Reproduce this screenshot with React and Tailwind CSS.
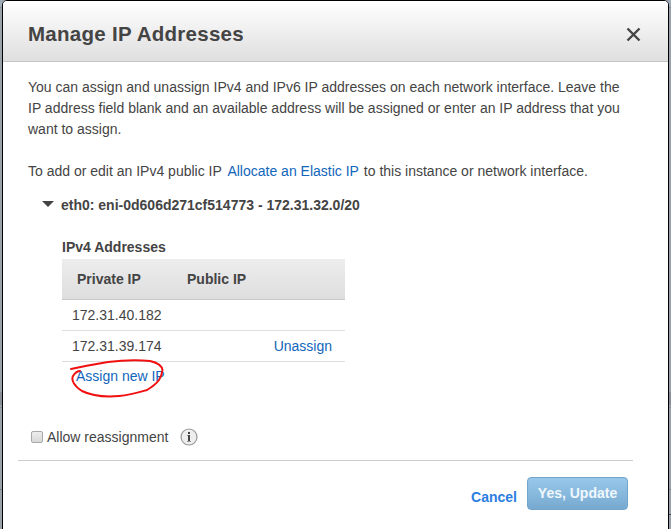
function InfoIcon() {
  return (
    <svg className="-mt-[1px] ml-[12px] h-[18px] w-[18px]" viewBox="0 0 18 18">
      <circle cx="9" cy="9" r="8" fill="#eee" stroke="#999" strokeWidth="1.2" />
      <path d="M8 4h2v2H8zM8 7h2v7H8z" fill="#444" />
      <path d="M7 7h1v1H7zM7 13h4v1H7z" fill="#999" />
    </svg>
  );
}

function ScribbleCircle() {
  return (
    <svg className="absolute -left-[2px] -top-[6px] h-[46px] w-[110px]" viewBox="60 356 110 46" fill="none">
      <path
        d="M71 369C84 366 96 364 108 362C124 360 140 360 150 361C159 363 162 367 162.500 370C162 374 161 377 159 380C156 384 152 387 147 390C140 392 130 395 119 396C106 397 92 396 82 391C74 386 71 380 73 376C75 373 77 371 80 371"
        stroke="#f01010"
        strokeWidth="2"
        strokeLinecap="round"
      />
    </svg>
  );
}

function BackdropEdge({ children }) {
  return (
    <div className="flex w-[2px] shrink-0 flex-col">
      <div className="h-[8px] border-b border-[#858d96] bg-[#a2adbc]" />
      <div className="h-[384px]" />
      <div className="h-[13px] bg-[#878e97]" />
      <div className="h-[3px] border-b border-[#858c95]" />
      <div className="h-[82px] border-b border-[#777e86]" />
      {children}
    </div>
  );
}

export default function App() {
  return (
    <div className="flex h-[529px] w-[671px] overflow-hidden bg-[#99a1ab] font-['Liberation_Sans',Arial,sans-serif] text-[14px] leading-[21px] text-[#444] whitespace-nowrap">
      <BackdropEdge />
      <div className="flex h-[540px] w-[667px] shrink-0 flex-col rounded-t-[5px] border border-black bg-white">
        <header className="flex h-[61px] shrink-0 items-center justify-between rounded-t-[4px] border-b border-[#c5c5c5] bg-linear-to-b from-white to-[#dfdfdf] pl-[25px] pr-[28px]">
          <h1 className="pt-[5px] text-[20.5px] font-bold leading-[24px] tracking-[0.27px]">Manage IP Addresses</h1>
          <svg className="mt-[7px] h-[13px] w-[13px] overflow-visible" viewBox="0 0 13 13">
            <path d="M0.5 0.5l12 12M12.5 0.5L0.5 12.5" stroke="#444" strokeWidth="2.4" />
          </svg>
        </header>

        <main className="flex flex-col">
          <div className="flex flex-col pl-[25px] pt-[15px]">
            <p>You can assign and unassign IPv4 and IPv6 IP addresses on each network interface. Leave the</p>
            <p>IP address field blank and an available address will be assigned or enter an IP address that you</p>
            <p>want to assign.</p>
            <p className="mt-[21px]">
              To add or edit an IPv4 public IP <a className="ml-[2px] mr-[1px] text-[#1166bb]">Allocate an Elastic IP</a> to this instance or network interface.
            </p>
          </div>

          <div className="mt-[13px] flex h-[21px] items-center pl-[39px] font-bold">
            <svg className="-mt-[3px] mr-[7px] h-[6px] w-[12px]" viewBox="0 0 12 6">
              <path d="M0 0h12L6 6z" fill="#444" />
            </svg>
            <span>eth0: eni-0d606d271cf514773 - 172.31.32.0/20</span>
          </div>

          <section className="mt-[21px] flex w-[283px] ml-[59px] flex-col">
            <h2 className="font-bold">IPv4 Addresses</h2>
            <div className="mt-[1px] grid h-[41px] grid-cols-[110px_1fr] items-center border-b border-[#c8c8c8] bg-linear-to-b from-[#ededed] to-[#dedede] pl-[15px] font-bold">
              <span>Private IP</span>
              <span>Public IP</span>
            </div>
            <div className="flex h-[31px] items-center border-b border-[#ddd] pl-[10px]">172.31.40.182</div>
            <div className="flex h-[31px] items-center justify-between border-b border-[#ddd] pl-[10px] pr-[13px]">
              <span>172.31.39.174</span>
              <a className="text-[#1166bb]">Unassign</a>
            </div>
            <div className="relative h-[30px] pl-[14px] pt-[4px]">
              <a className="text-[#1166bb]">Assign new IP</a>
              <ScribbleCircle />
            </div>
          </section>

          <div className="mt-[35px] flex h-[21px] items-center pl-[28px]">
            <span className="-mt-[1px] mr-[4px] h-[12px] w-[12px] rounded-[2px] border border-[#a8a8a8] bg-linear-to-b from-[#ededed] to-[#d8d8d8]" />
            <span>Allow reassignment</span>
            <InfoIcon />
          </div>
        </main>

        <footer className="ml-[15px] mt-[12px] flex w-[615px] items-start justify-end border-t border-[#ccc] pr-[5px] pt-[16px] font-bold">
          <a className="mr-[10px] mt-[10px] text-[#2a7de1]">Cancel</a>
          <button className="h-[33px] w-[101px] rounded-[4px] border border-[#73a5cb] bg-linear-to-b from-[#98c9eb] to-[#77a9d0] text-[14px] font-bold text-[#f0f7fd] shadow-[inset_0_0_1px_#82b3d8]">
            Yes, Update
          </button>
        </footer>
      </div>
      <BackdropEdge>
        <div className="h-[25px] border-b border-[#444a52]" />
      </BackdropEdge>
    </div>
  );
}
